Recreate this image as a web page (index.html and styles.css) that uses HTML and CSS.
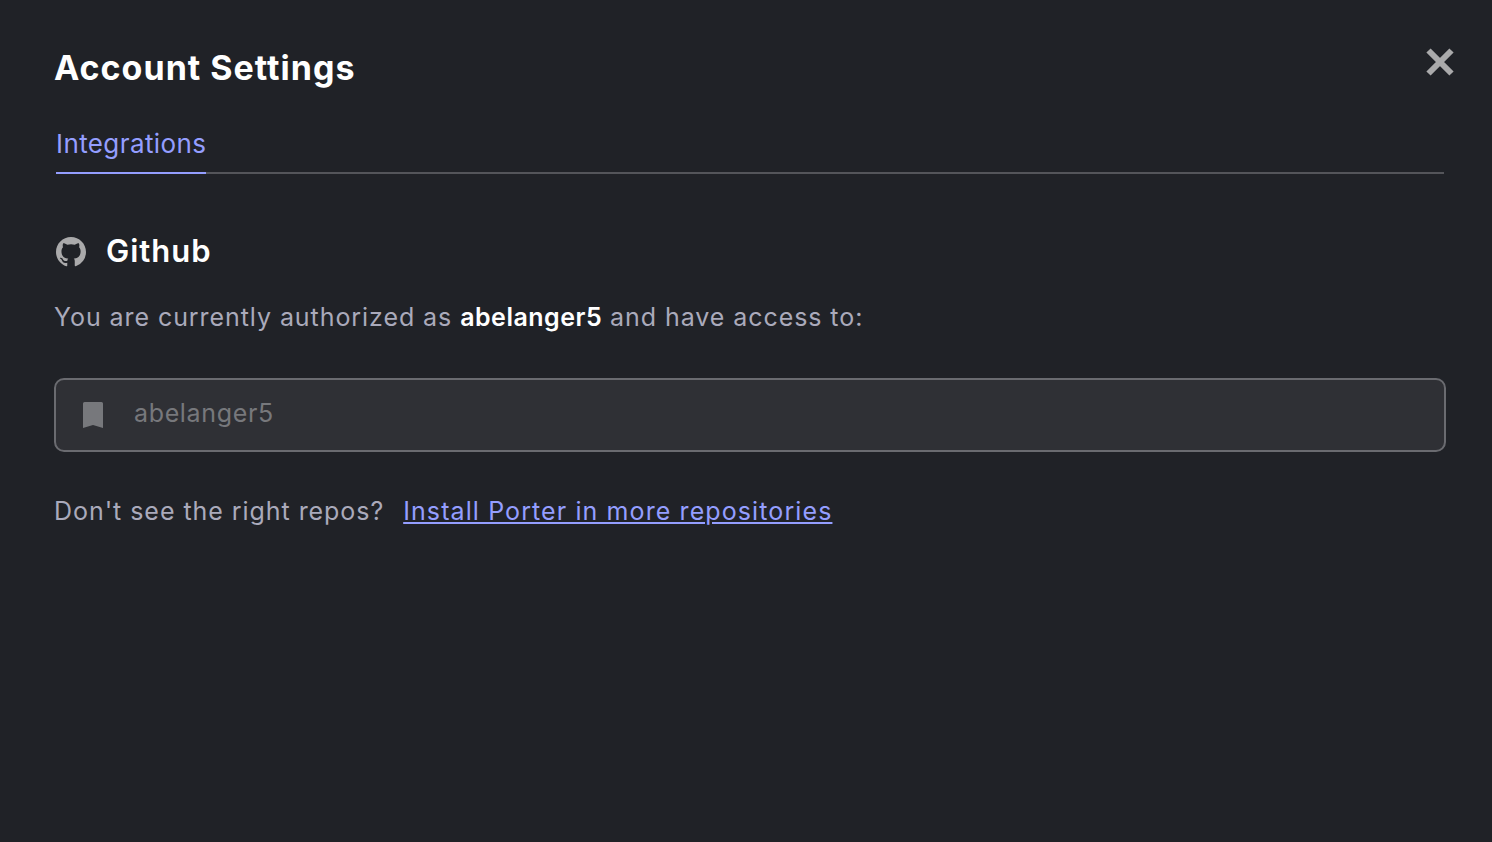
FILE: index.html
```html
<!DOCTYPE html>
<html lang="en">
<head>
    <meta charset="UTF-8">
    <title>Account Settings</title>
    <link rel="stylesheet" href="styles.css">
</head>
<body>

    <main class="settings">
        <!-- Close button -->
        <button class="close-btn" aria-label="Close">
            <svg viewBox="0 0 32 32" width="32" height="32"><path d="M4.500 4.500 27.500 27.500M27.500 4.500 4.500 27.500"/></svg>
        </button>

        <h1 class="title">Account Settings</h1>

        <!-- Tabs -->
        <div class="tabs">
            <span class="tab">Integrations</span>
        </div>

        <!-- Github section -->
        <div class="provider">
            <svg class="github-icon" viewBox="0 0 16 16" width="30" height="30"><path d="M8 0C3.58 0 0 3.58 0 8c0 3.54 2.29 6.53 5.47 7.59.4.07.55-.17.55-.38 0-.19-.01-.82-.01-1.49-2.01.37-2.53-.49-2.69-.94-.09-.23-.48-.94-.82-1.13-.28-.15-.68-.52-.01-.53.63-.01 1.08.58 1.23.82.72 1.21 1.87.87 2.33.66.07-.52.28-.87.51-1.07-1.78-.2-3.64-.89-3.64-3.95 0-.87.31-1.59.82-2.15-.08-.2-.36-1.02.08-2.12 0 0 .67-.21 2.2.82.64-.18 1.32-.27 2-.27.68 0 1.36.09 2 .27 1.53-1.04 2.2-.82 2.2-.82.44 1.1.16 1.92.08 2.12.51.56.82 1.27.82 2.15 0 3.07-1.87 3.75-3.65 3.95.29.25.54.73.54 1.48 0 1.07-.01 1.93-.01 2.2 0 .21.15.46.55.38A8.013 8.013 0 0016 8c0-4.42-3.58-8-8-8z"/></svg>
            <h2>Github</h2>
        </div>

        <p class="auth-text">You are currently authorized as <b>abelanger5</b> and have access to:</p>

        <div class="repo-row">
            <svg class="repo-icon" viewBox="0 0 22 26" width="22" height="26"><path d="M2.500 0h17A1.500 1.500 0 0 1 21 1.500V26l-10-3-10 3V1.500A1.500 1.500 0 0 1 2.500 0z"/></svg>
            <span>abelanger5</span>
        </div>

        <p class="install-text">Don't see the right repos? <a href="#">Install Porter in more repositories</a></p>
    </main>

</body>
</html>
```

FILE: styles.css
```css
* {
    margin: 0;
    padding: 0;
    box-sizing: border-box;
}

body {
    font-family: Inter, "Open Sans", sans-serif;
    background-color: #202227;
    height: 842px;
    overflow: hidden;
}

.settings {
    position: relative;
    padding: 45px 46px 0 54px;
}

.close-btn {
    position: absolute;
    top: 46px;
    right: 36px;
    background: none;
    border: none;
    display: flex;
    cursor: pointer;
}

.close-btn svg {
    fill: none;
    stroke: #aaaaab;
    stroke-width: 6;
}

.title {
    font-size: 34px;
    line-height: 46px;
    font-weight: 700;
    color: #ffffff;
    letter-spacing: 1px;
}

.tabs {
    margin: 35px 2px 0 2px;
    height: 48px;
    display: flex;
    border-bottom: 2px solid #54555a;
}

.tab {
    height: 48px;
    padding-top: 1px;
    font-size: 26px;
    line-height: 34px;
    letter-spacing: 0.4px;
    color: #949eff;
    border-bottom: 2px solid #949eff;
}

.provider {
    display: flex;
    align-items: center;
    gap: 20px;
    margin: 59px 0 0 2px;
}

.github-icon {
    fill: #aaaaab;
}

.provider h2 {
    font-size: 31px;
    line-height: 36px;
    margin-bottom: 2px;
    font-weight: 600;
    letter-spacing: 1px;
    color: #ffffff;
}

.auth-text {
    margin-top: 29px;
    font-size: 25px;
    line-height: 34px;
    letter-spacing: 0.93px;
    color: #aaaabb;
}

.auth-text b {
    font-weight: 600;
    letter-spacing: 0.5px;
    color: #ffffff;
}

.repo-row {
    display: flex;
    align-items: center;
    gap: 30px;
    height: 74px;
    margin-top: 44px;
    padding-left: 26px;
    background-color: #2f3035;
    border: 2px solid #6a6b70;
    border-radius: 10px;
    font-size: 25px;
    letter-spacing: 0.65px;
    color: #77787c;
}

.repo-row span {
    margin-bottom: 4px;
}

.repo-icon {
    fill: #77787c;
}

.install-text {
    margin-top: 42px;
    font-size: 25px;
    line-height: 34px;
    letter-spacing: 0.95px;
    color: #aaaabb;
}

.install-text a {
    margin-left: 11px;
    letter-spacing: 1.1px;
    color: #949eff;
}
```
